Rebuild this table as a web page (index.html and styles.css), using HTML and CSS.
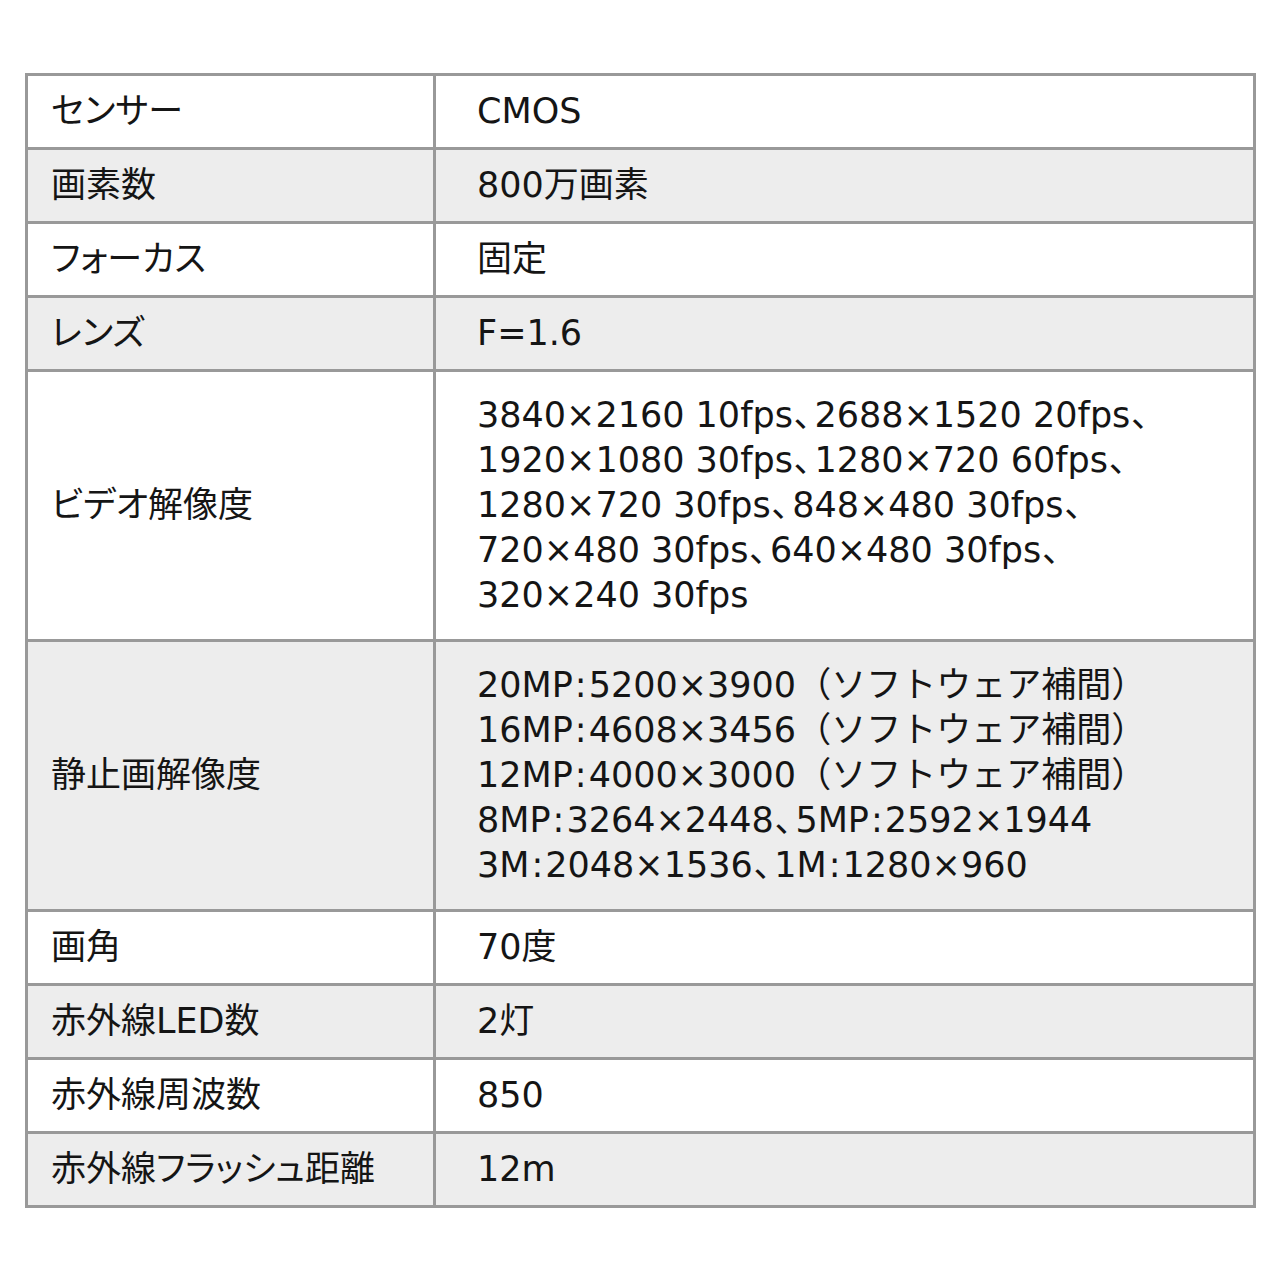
FILE: index.html
```html
<!DOCTYPE html>
<html lang="ja">
<head>
<meta charset="utf-8">
<link rel="stylesheet" href="styles.css">
</head>
<body>
<table class="spec">
  <tbody>
    <tr><th>センサー</th><td>CMOS</td></tr>
    <tr class="alt"><th>画素数</th><td>800万画素</td></tr>
    <tr><th>フォーカス</th><td>固定</td></tr>
    <tr class="alt"><th>レンズ</th><td>F=1.6</td></tr>
    <tr class="multi"><th>ビデオ解像度</th><td>3840×2160 10fps<span class="comma">、</span>2688×1520 20fps<span class="comma">、</span><br>1920×1080 30fps<span class="comma">、</span>1280×720 60fps<span class="comma">、</span><br>1280×720 30fps<span class="comma">、</span>848×480 30fps<span class="comma">、</span><br>720×480 30fps<span class="comma">、</span>640×480 30fps<span class="comma">、</span><br>320×240 30fps</td></tr>
    <tr class="alt multi"><th>静止画解像度</th><td>20MP<span class="colon">:</span>5200×3900<span class="full">（ソフトウェア補間）</span><br>16MP<span class="colon">:</span>4608×3456<span class="full">（ソフトウェア補間）</span><br>12MP<span class="colon">:</span>4000×3000<span class="full">（ソフトウェア補間）</span><br>8MP<span class="colon">:</span>3264×2448<span class="comma">、</span>5MP<span class="colon">:</span>2592×1944<br>3M<span class="colon">:</span>2048×1536<span class="comma">、</span>1M<span class="colon">:</span>1280×960</td></tr>
    <tr><th>画角</th><td>70度</td></tr>
    <tr class="alt"><th>赤外線LED数</th><td>2灯</td></tr>
    <tr><th>赤外線周波数</th><td>850</td></tr>
    <tr class="alt"><th>赤外線フラッシュ距離</th><td>12m</td></tr>
  </tbody>
</table>
</body>
</html>
```
FILE: styles.css
```css
html, body {
  margin: 0;
  padding: 0;
  background: #ffffff;
}
body {
  font-family: "DejaVu Sans", "Noto Sans CJK JP", sans-serif;
  font-feature-settings: "palt";
  color: #151515;
  font-size: 35px;
}
.spec {
  margin: 73px 0 0 25px;
  width: 1231px;
  border-collapse: collapse;
  border: 3px solid #999999;
}
.spec th,
.spec td {
  border: 3px solid #999999;
  font-weight: normal;
  text-align: left;
  vertical-align: middle;
  line-height: 45px;
  height: 45px;
  padding-top: 13px;
  padding-bottom: 13px;
}
.spec th {
  width: 382px;
  padding-left: 23px;
  padding-right: 0;
}
.spec td {
  padding-left: 41px;
  padding-right: 0;
}
.spec tr.alt {
  background: #ededed;
}
.spec tr.multi th,
.spec tr.multi td {
  padding-top: 21px;
  padding-bottom: 21px;
}
.full {
  font-feature-settings: normal;
}
.colon {
  margin: 0 2px;
}
.comma {
  margin: 0 3px 0 1px;
}
```
